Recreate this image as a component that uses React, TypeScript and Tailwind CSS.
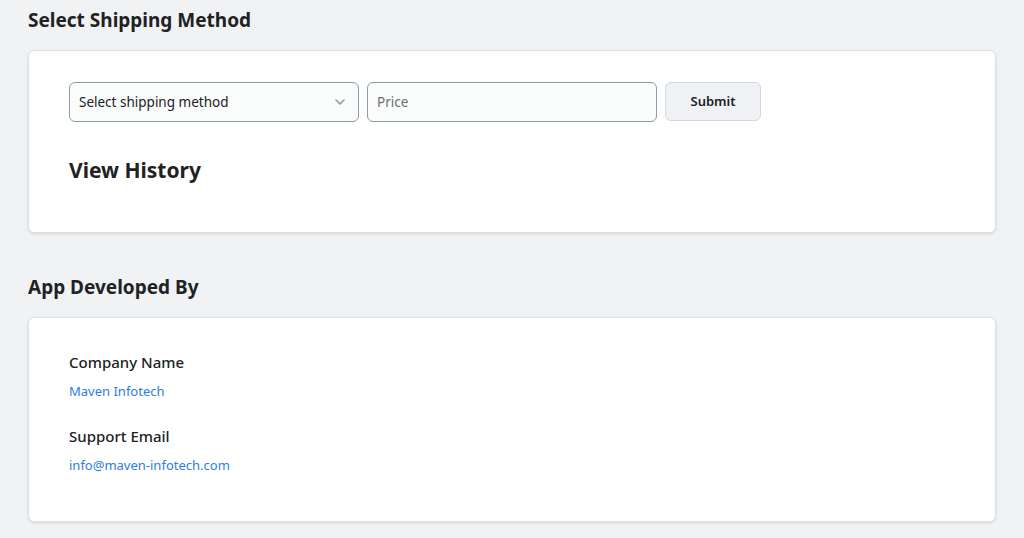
import React from "react";

export default function App() {
  return (
    <div className="min-h-[538px] bg-[#f1f2f4] px-[28px] pt-[7px] pb-4 text-[#202223]" style={{ fontFamily: '"Noto Sans", "Open Sans", sans-serif' }}>
      <h2 className="text-[19px] font-bold leading-[26px]">Select Shipping Method</h2>
      <div className="mt-[17px] h-[183px] rounded-[6px] border border-[#dcdfe3] bg-white px-[40px] pt-[31px] shadow-[0_1px_3px_rgba(0,0,0,0.12)]">
        <div className="flex items-start gap-[8px]">
          <div className="flex h-[40px] w-[290px] items-center justify-between rounded-[6px] border border-[#8c9bab] bg-[#fafbfb] pl-[9px] pr-[12px]">
            <span className="text-[13.5px] text-[#202223]">Select shipping method</span>
            <svg width="12" height="12" viewBox="0 0 12 12" fill="none">
              <path d="M2 4l4 4 4-4" stroke="#8c9bab" strokeWidth="1.6" strokeLinecap="round" strokeLinejoin="round" />
            </svg>
          </div>
          <div className="flex h-[40px] w-[290px] items-center rounded-[6px] border border-[#8c9bab] bg-[#fafbfb] pl-[9px]">
            <span className="text-[13.5px] text-[#6d7175]">Price</span>
          </div>
          <button className="flex h-[39px] w-[96px] items-center justify-center rounded-[6px] border border-[#d3d8de] bg-[#eff1f4] text-[13px] font-semibold text-[#202223]">
            Submit
          </button>
        </div>
        <h3 className="mt-[33px] text-[21px] font-bold leading-[30px]">View History</h3>
      </div>
      <h2 className="mt-[41px] text-[19px] font-bold leading-[26px]">App Developed By</h2>
      <div className="mt-[17px] h-[205px] rounded-[6px] border border-[#dcdfe3] bg-white px-[40px] pt-[33px] shadow-[0_1px_3px_rgba(0,0,0,0.12)]">
        <div className="text-[15px] font-medium leading-[22px]">Company Name</div>
        <div className="mt-[8px] text-[13px] leading-[20px] text-[#2d7de3]">Maven Infotech</div>
        <div className="mt-[24px] text-[15px] font-medium leading-[22px]">Support Email</div>
        <div className="mt-[8px] text-[13px] leading-[20px] text-[#2d7de3]">info@maven-infotech.com</div>
      </div>
    </div>
  );
}
